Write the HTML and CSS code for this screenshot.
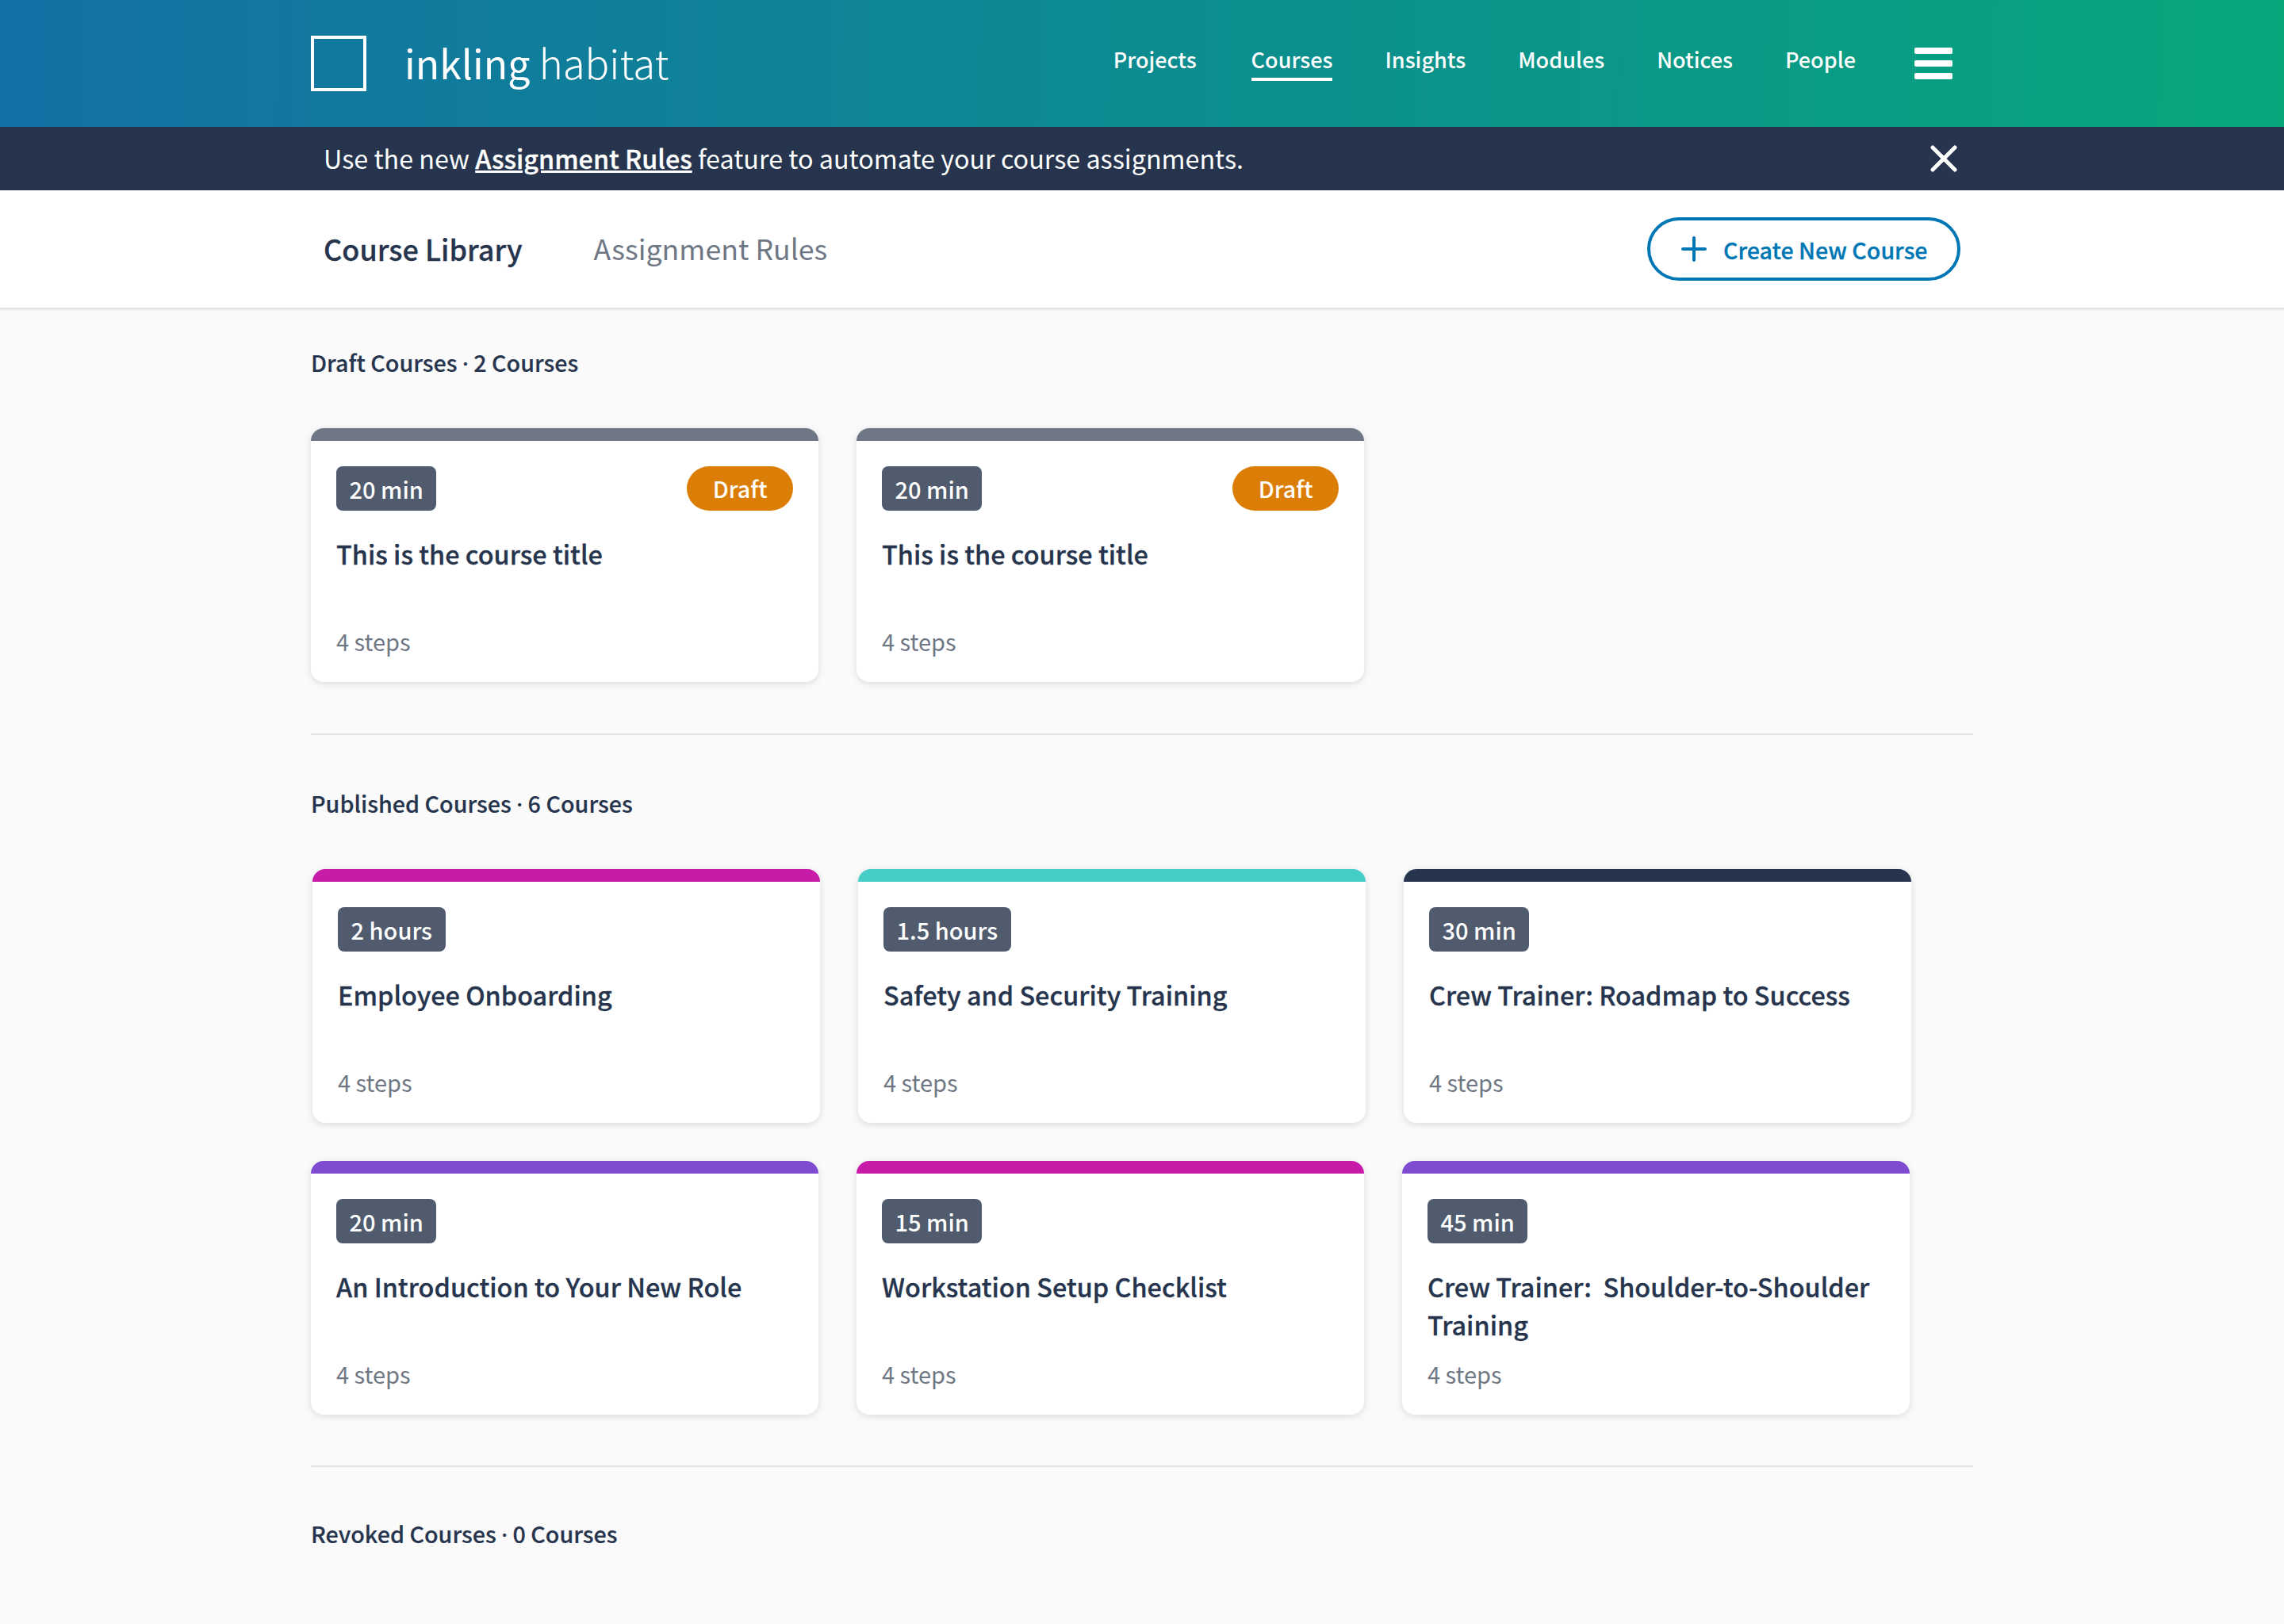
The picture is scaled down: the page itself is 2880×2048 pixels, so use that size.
FILE: index.html
```html
<!DOCTYPE html>
<html lang="en-US">
<head>
	<meta charset="UTF-8">
	<title>Course Library</title>
	<link rel="stylesheet" href="styles.css">
</head>
<body>
	<header class="top_bar">
		<div class="top_inner">
			<a class="logo" href="#">
				<span class="logo_box"></span>
				<span class="logo_text">inkling <span class="logo_light">habitat</span></span>
			</a>
			<nav class="main_nav">
				<a href="#" class="first">Projects</a>
				<a href="#" class="active">Courses</a>
				<a href="#">Insights</a>
				<a href="#">Modules</a>
				<a href="#">Notices</a>
				<a href="#">People</a>
			</nav>
			<div class="burger"><span></span><span></span><span></span></div>
		</div>
	</header>

	<div class="notice_bar">
		<div class="notice_inner">
			<p>Use the new <a href="#">Assignment Rules</a> feature to automate your course assignments.</p>
			<svg class="notice_close" width="34" height="34" viewBox="0 0 34 34"><path d="M3 3L31 31M31 3L3 31" stroke="#fff" stroke-width="5" stroke-linecap="round" fill="none"/></svg>
		</div>
	</div>

	<div class="tab_bar">
		<div class="tab_inner">
			<a class="tab current" href="#">Course Library</a>
			<a class="tab" href="#">Assignment Rules</a>
			<a class="btn_create" href="#">
				<svg width="32" height="32" viewBox="0 0 32 32"><path d="M16 2V30M2 16H30" stroke="#0077b5" stroke-width="4" stroke-linecap="round" fill="none"/></svg>
				Create New Course
			</a>
		</div>
	</div>

	<main class="content">
		<section class="group">
			<h2>Draft Courses <span class="dot">·</span> 2 Courses</h2>
			<div class="cards">
				<div class="card gray">
					<div class="card_top"><span class="tag">20 min</span><span class="draft">Draft</span></div>
					<h3>This is the course title</h3>
					<p class="steps">4 steps</p>
				</div>
				<div class="card gray">
					<div class="card_top"><span class="tag">20 min</span><span class="draft">Draft</span></div>
					<h3>This is the course title</h3>
					<p class="steps">4 steps</p>
				</div>
			</div>
		</section>

		<section class="group">
			<h2>Published Courses <span class="dot">·</span> 6 Courses</h2>
			<div class="cards">
				<div class="card pink shift">
					<div class="card_top"><span class="tag">2 hours</span></div>
					<h3>Employee Onboarding</h3>
					<p class="steps">4 steps</p>
				</div>
				<div class="card teal shift">
					<div class="card_top"><span class="tag">1.5 hours</span></div>
					<h3>Safety and Security Training</h3>
					<p class="steps">4 steps</p>
				</div>
				<div class="card navy shift">
					<div class="card_top"><span class="tag">30 min</span></div>
					<h3>Crew Trainer: Roadmap to Success</h3>
					<p class="steps">4 steps</p>
				</div>
				<div class="card purple">
					<div class="card_top"><span class="tag">20 min</span></div>
					<h3>An Introduction to Your New Role</h3>
					<p class="steps">4 steps</p>
				</div>
				<div class="card pink">
					<div class="card_top"><span class="tag">15 min</span></div>
					<h3>Workstation Setup Checklist</h3>
					<p class="steps">4 steps</p>
				</div>
				<div class="card purple">
					<div class="card_top"><span class="tag">45 min</span></div>
					<h3>Crew Trainer:&nbsp; Shoulder-to-Shoulder Training</h3>
					<p class="steps">4 steps</p>
				</div>
			</div>
		</section>

		<section class="group last">
			<h2>Revoked Courses <span class="dot">·</span> 0 Courses</h2>
		</section>
	</main>
</body>
</html>
```

FILE: styles.css
```css
*{
	padding:0;
	margin:0;
	box-sizing:border-box;
}
html,body{
	height:100%;
}
body{
	background:#fafafa;
	color:#26354d;
	font-family:"Noto Sans CJK SC","Noto Sans",sans-serif;
}
a{
	color:inherit;
	text-decoration:none;
}

/* top bar */
.top_bar{
	height:160px;
	background:linear-gradient(91deg,#1370a5 0%,#07a77c 100%);
	color:#fff;
}
.top_inner{
	width:2096px;
	height:160px;
	margin:0 auto;
	display:flex;
	align-items:center;
}
.logo{
	display:flex;
	align-items:center;
	gap:48px;
}
.logo_box{
	width:70px;
	height:70px;
	border:4px solid #fff;
}
.logo_text{
	font-size:50px;
	line-height:66px;
	padding-bottom:4px;
	font-weight:400;
}
.logo_light{
	font-size:51px;
	font-weight:300;
}
.main_nav{
	margin-left:auto;
	display:flex;
	gap:66px;
}
.main_nav a{
	font-size:27px;
	line-height:34px;
	padding-bottom:6px;
	font-weight:500;
	border-bottom:4px solid transparent;
}
.main_nav a.first{
	margin-right:3px;
}
.main_nav a.active{
	border-bottom-color:#fff;
}
.burger{
	width:48px;
	margin:0 26px 0 74px;
	display:flex;
	flex-direction:column;
	gap:8px;
}
.burger span{
	height:8px;
	background:#fff;
	border-radius:2px;
}

/* notice */
.notice_bar{
	height:80px;
	background:#26354d;
	color:#fff;
}
.notice_inner{
	width:2096px;
	height:80px;
	margin:0 auto;
	padding:0 20px 0 16px;
	display:flex;
	align-items:center;
	justify-content:space-between;
}
.notice_inner p{
	font-size:32.3px;
	line-height:46px;
	padding-bottom:2px;
}
.notice_inner a{
	font-weight:500;
	text-decoration:underline;
	-webkit-text-stroke:.3px #fff;
}

/* tabs */
.tab_bar{
	height:150px;
	background:#fff;
	border-bottom:2px solid #e0e0e5;
	box-shadow:0 1px 2px rgba(38,53,77,.08);
}
.tab_inner{
	width:2096px;
	height:148px;
	margin:0 auto;
	padding:0 16px;
	display:flex;
	align-items:center;
	gap:90px;
}
.tab{
	font-size:35.7px;
	line-height:54px;
	padding-bottom:2px;
	color:#6f7785;
}
.tab.current{
	font-size:36px;
	color:#26354d;
	font-weight:500;
	-webkit-text-stroke:.3px #26354d;
}
.btn_create{
	margin-left:auto;
	width:395px;
	height:80px;
	border:4px solid #0077b5;
	border-radius:40px;
	display:flex;
	align-items:center;
	padding-left:39px;
	gap:21px;
	color:#0077b5;
	font-size:28.6px;
	font-weight:500;
	-webkit-text-stroke:.3px #0077b5;
}

/* course lists */
.content{
	width:2096px;
	margin:0 auto;
}
.group{
	padding-top:44px;
	padding-bottom:65px;
	border-bottom:2px solid #e4e4e8;
}
.group + .group{
	padding-top:63px;
	padding-bottom:64px;
}
.group.last{
	padding-top:61px;
	border-bottom:0;
}
.group h2{
	height:46px;
	font-size:28.7px;
	line-height:46px;
	font-weight:500;
	-webkit-text-stroke:.2px #26354d;
}
.dot{
	font-family:"Noto Sans",sans-serif;
	line-height:0;
}
.cards{
	display:grid;
	grid-template-columns:repeat(3,640px);
	column-gap:48px;
	row-gap:48px;
	margin-top:60px;
}
.card{
	height:320px;
	background:#fff;
	border-top:16px solid #6f7785;
	border-radius:16px;
	padding:32px 32px 0;
	box-shadow:0 2px 9px rgba(38,53,77,.16);
}
.card.shift{
	transform:translateX(2px);
}
.gray{ border-top-color:#6f7785; }
.pink{ border-top-color:#c81ba8; }
.teal{ border-top-color:#45cdc8; }
.navy{ border-top-color:#26354d; }
.purple{ border-top-color:#7f4bd1; }
.card_top{
	display:flex;
	justify-content:space-between;
	height:56px;
}
.tag{
	background:#515b6e;
	color:#fff;
	height:56px;
	line-height:56px;
	padding:0 16.5px;
	border-radius:8px;
	font-size:29px;
	font-weight:500;
}
.draft{
	background:#dc7e06;
	color:#fff;
	height:56px;
	line-height:56px;
	padding:0 32.5px;
	border-radius:28px;
	font-size:28.7px;
	font-weight:500;
}
.card h3{
	margin-top:30px;
	height:96px;
	font-size:32.4px;
	line-height:48px;
	font-weight:500;
	-webkit-text-stroke:.3px #26354d;
}
.steps{
	margin-top:18px;
	font-size:29px;
	line-height:40px;
	color:#6f7785;
}
```
